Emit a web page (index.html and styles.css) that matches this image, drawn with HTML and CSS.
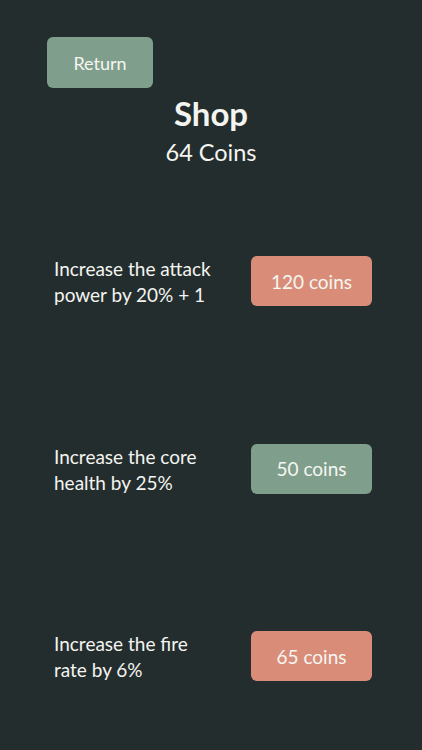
FILE: index.html
```html
<!DOCTYPE html>
<html>
<head>
<meta charset="utf-8">
<link rel="stylesheet" href="styles.css">
</head>
<body>
<div class="screen">
  <div class="top">
    <div class="btn btn-green return">Return</div>
  </div>
  <div class="title">Shop</div>
  <div class="coins">64 Coins</div>
  <div class="items">
    <div class="row">
      <div class="desc">Increase the attack<br>power by 20% + 1</div>
      <div class="btn btn-red price">120 coins</div>
    </div>
    <div class="row">
      <div class="desc">Increase the core<br>health by 25%</div>
      <div class="btn btn-green price">50 coins</div>
    </div>
    <div class="row">
      <div class="desc">Increase the fire<br>rate by 6%</div>
      <div class="btn btn-red price">65 coins</div>
    </div>
  </div>
</div>
</body>
</html>
```
FILE: styles.css
```css
html, body {
  margin: 0;
  padding: 0;
  background: #232d2e;
}
.screen {
  width: 422px;
  height: 750px;
  box-sizing: border-box;
  padding-top: 37px;
  font-family: "Lato", "Open Sans", sans-serif;
  color: #f4f4f0;
}
.top {
  padding-left: 47px;
  display: flex;
}
.btn {
  display: flex;
  align-items: center;
  justify-content: center;
  border-radius: 6px;
  font-size: 19px;
  color: #f6f6f2;
}
.btn-green { background: #7f9e8b; }
.btn-red { background: #d98d78; }
.return {
  width: 106px;
  height: 51px;
  font-size: 18px;
}
.title {
  margin-top: 6px;
  text-align: center;
  font-size: 33px;
  font-weight: 700;
  line-height: 38px;
}
.coins {
  margin-top: 5px;
  text-align: center;
  font-size: 23.5px;
  line-height: 30px;
}
.items {
  margin-top: 89px;
  display: flex;
  flex-direction: column;
  gap: 137.5px;
  padding: 0 50px 0 54px;
}
.row {
  display: flex;
  align-items: center;
  justify-content: space-between;
  height: 50px;
}
.desc {
  font-size: 19px;
  line-height: 26px;
  padding-top: 2px;
}
.price {
  width: 121px;
  height: 50px;
}
```
